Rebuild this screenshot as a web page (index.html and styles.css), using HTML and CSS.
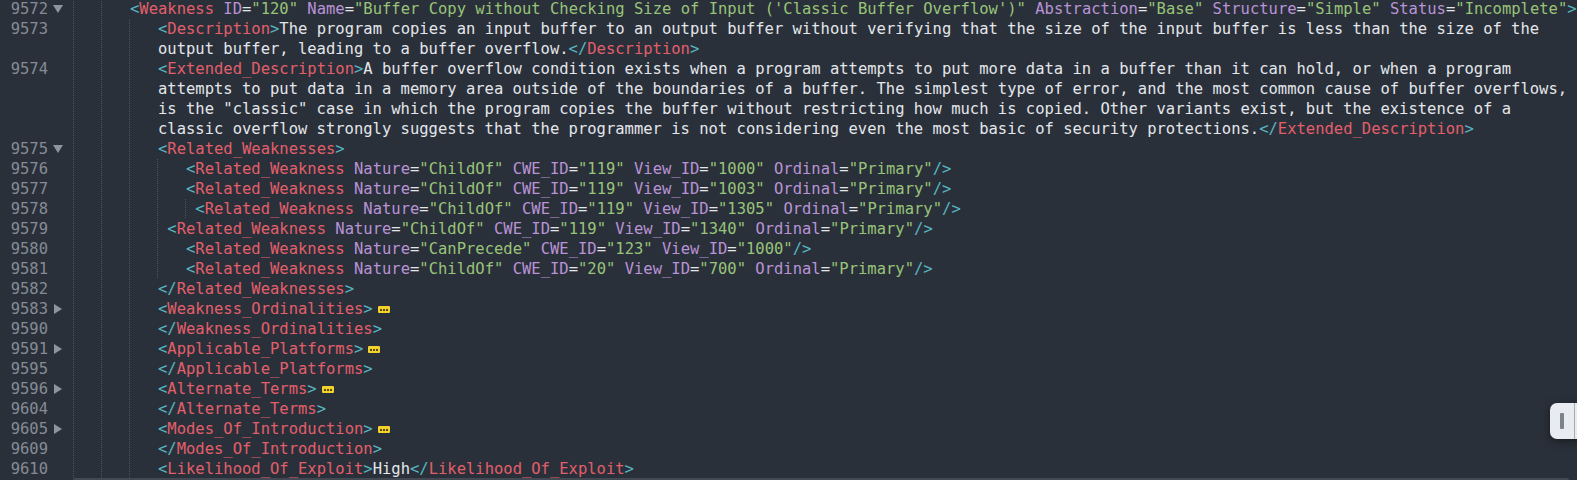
FILE: index.html
```html
<!DOCTYPE html>
<html lang="en">
<head>
<meta charset="utf-8">
<title>CWE XML</title>
<link rel="stylesheet" href="styles.css">
</head>
<body>
<div class="editor">
  <div class="lines">
  <div class="row"><div class="gutter"><span class="ln">9572</span><span class="fold down"></span></div><div class="code g2 i6"><span class="b">&lt;</span><span class="t">Weakness</span> <span class="a">ID</span>=<span class="s">"120"</span> <span class="a">Name</span>=<span class="s">"Buffer Copy without Checking Size of Input ('Classic Buffer Overflow')"</span> <span class="a">Abstraction</span>=<span class="s">"Base"</span> <span class="a">Structure</span>=<span class="s">"Simple"</span> <span class="a">Status</span>=<span class="s">"Incomplete"</span><span class="b">&gt;</span></div></div>
  <div class="row"><div class="gutter"><span class="ln">9573</span><span class="fold"></span></div><div class="code g3 i9"><span class="b">&lt;</span><span class="t">Description</span><span class="b">&gt;</span>The program copies an input buffer to an output buffer without verifying that the size of the input buffer is less than the size of the</div></div>
  <div class="row"><div class="gutter"><span class="ln"></span><span class="fold"></span></div><div class="code g3 i9">output buffer, leading to a buffer overflow.<span class="b">&lt;/</span><span class="t">Description</span><span class="b">&gt;</span></div></div>
  <div class="row"><div class="gutter"><span class="ln">9574</span><span class="fold"></span></div><div class="code g3 i9"><span class="b">&lt;</span><span class="t">Extended_Description</span><span class="b">&gt;</span>A buffer overflow condition exists when a program attempts to put more data in a buffer than it can hold, or when a program</div></div>
  <div class="row"><div class="gutter"><span class="ln"></span><span class="fold"></span></div><div class="code g3 i9">attempts to put data in a memory area outside of the boundaries of a buffer. The simplest type of error, and the most common cause of buffer overflows,</div></div>
  <div class="row"><div class="gutter"><span class="ln"></span><span class="fold"></span></div><div class="code g3 i9">is the "classic" case in which the program copies the buffer without restricting how much is copied. Other variants exist, but the existence of a</div></div>
  <div class="row"><div class="gutter"><span class="ln"></span><span class="fold"></span></div><div class="code g3 i9">classic overflow strongly suggests that the programmer is not considering even the most basic of security protections.<span class="b">&lt;/</span><span class="t">Extended_Description</span><span class="b">&gt;</span></div></div>
  <div class="row"><div class="gutter"><span class="ln">9575</span><span class="fold down"></span></div><div class="code g3 i9"><span class="b">&lt;</span><span class="t">Related_Weaknesses</span><span class="b">&gt;</span></div></div>
  <div class="row"><div class="gutter"><span class="ln">9576</span><span class="fold"></span></div><div class="code g4 i12"><span class="b">&lt;</span><span class="t">Related_Weakness</span> <span class="a">Nature</span>=<span class="s">"ChildOf"</span> <span class="a">CWE_ID</span>=<span class="s">"119"</span> <span class="a">View_ID</span>=<span class="s">"1000"</span> <span class="a">Ordinal</span>=<span class="s">"Primary"</span><span class="b">/&gt;</span></div></div>
  <div class="row"><div class="gutter"><span class="ln">9577</span><span class="fold"></span></div><div class="code g4 i12"><span class="b">&lt;</span><span class="t">Related_Weakness</span> <span class="a">Nature</span>=<span class="s">"ChildOf"</span> <span class="a">CWE_ID</span>=<span class="s">"119"</span> <span class="a">View_ID</span>=<span class="s">"1003"</span> <span class="a">Ordinal</span>=<span class="s">"Primary"</span><span class="b">/&gt;</span></div></div>
  <div class="row"><div class="gutter"><span class="ln">9578</span><span class="fold"></span></div><div class="code g5 i13"><span class="b">&lt;</span><span class="t">Related_Weakness</span> <span class="a">Nature</span>=<span class="s">"ChildOf"</span> <span class="a">CWE_ID</span>=<span class="s">"119"</span> <span class="a">View_ID</span>=<span class="s">"1305"</span> <span class="a">Ordinal</span>=<span class="s">"Primary"</span><span class="b">/&gt;</span></div></div>
  <div class="row"><div class="gutter"><span class="ln">9579</span><span class="fold"></span></div><div class="code g4 i10"><span class="b">&lt;</span><span class="t">Related_Weakness</span> <span class="a">Nature</span>=<span class="s">"ChildOf"</span> <span class="a">CWE_ID</span>=<span class="s">"119"</span> <span class="a">View_ID</span>=<span class="s">"1340"</span> <span class="a">Ordinal</span>=<span class="s">"Primary"</span><span class="b">/&gt;</span></div></div>
  <div class="row"><div class="gutter"><span class="ln">9580</span><span class="fold"></span></div><div class="code g4 i12"><span class="b">&lt;</span><span class="t">Related_Weakness</span> <span class="a">Nature</span>=<span class="s">"CanPrecede"</span> <span class="a">CWE_ID</span>=<span class="s">"123"</span> <span class="a">View_ID</span>=<span class="s">"1000"</span><span class="b">/&gt;</span></div></div>
  <div class="row"><div class="gutter"><span class="ln">9581</span><span class="fold"></span></div><div class="code g4 i12"><span class="b">&lt;</span><span class="t">Related_Weakness</span> <span class="a">Nature</span>=<span class="s">"ChildOf"</span> <span class="a">CWE_ID</span>=<span class="s">"20"</span> <span class="a">View_ID</span>=<span class="s">"700"</span> <span class="a">Ordinal</span>=<span class="s">"Primary"</span><span class="b">/&gt;</span></div></div>
  <div class="row"><div class="gutter"><span class="ln">9582</span><span class="fold"></span></div><div class="code g3 i9"><span class="b">&lt;/</span><span class="t">Related_Weaknesses</span><span class="b">&gt;</span></div></div>
  <div class="row"><div class="gutter"><span class="ln">9583</span><span class="fold right"></span></div><div class="code g3 i9"><span class="b">&lt;</span><span class="t">Weakness_Ordinalities</span><span class="b">&gt;</span><span class="dots"><i></i><i></i><i></i></span></div></div>
  <div class="row"><div class="gutter"><span class="ln">9590</span><span class="fold"></span></div><div class="code g3 i9"><span class="b">&lt;/</span><span class="t">Weakness_Ordinalities</span><span class="b">&gt;</span></div></div>
  <div class="row"><div class="gutter"><span class="ln">9591</span><span class="fold right"></span></div><div class="code g3 i9"><span class="b">&lt;</span><span class="t">Applicable_Platforms</span><span class="b">&gt;</span><span class="dots"><i></i><i></i><i></i></span></div></div>
  <div class="row"><div class="gutter"><span class="ln">9595</span><span class="fold"></span></div><div class="code g3 i9"><span class="b">&lt;/</span><span class="t">Applicable_Platforms</span><span class="b">&gt;</span></div></div>
  <div class="row"><div class="gutter"><span class="ln">9596</span><span class="fold right"></span></div><div class="code g3 i9"><span class="b">&lt;</span><span class="t">Alternate_Terms</span><span class="b">&gt;</span><span class="dots"><i></i><i></i><i></i></span></div></div>
  <div class="row"><div class="gutter"><span class="ln">9604</span><span class="fold"></span></div><div class="code g3 i9"><span class="b">&lt;/</span><span class="t">Alternate_Terms</span><span class="b">&gt;</span></div></div>
  <div class="row"><div class="gutter"><span class="ln">9605</span><span class="fold right"></span></div><div class="code g3 i9"><span class="b">&lt;</span><span class="t">Modes_Of_Introduction</span><span class="b">&gt;</span><span class="dots"><i></i><i></i><i></i></span></div></div>
  <div class="row"><div class="gutter"><span class="ln">9609</span><span class="fold"></span></div><div class="code g3 i9"><span class="b">&lt;/</span><span class="t">Modes_Of_Introduction</span><span class="b">&gt;</span></div></div>
  <div class="row"><div class="gutter"><span class="ln">9610</span><span class="fold"></span></div><div class="code g3 i9"><span class="b">&lt;</span><span class="t">Likelihood_Of_Exploit</span><span class="b">&gt;</span>High<span class="b">&lt;/</span><span class="t">Likelihood_Of_Exploit</span><span class="b">&gt;</span></div></div>
  </div>
  <div class="hscroll"></div>
  <div class="sidetab"><span class="grip"></span></div>
</div>
</body>
</html>
```
FILE: styles.css
```css
html, body {
  margin: 0;
  padding: 0;
  background: #2a303a;
}
.editor {
  position: relative;
  width: 1577px;
  height: 480px;
  overflow: hidden;
  background: #2a303a;
  font-family: "DejaVu Sans Mono", "Liberation Mono", monospace;
  font-size: 15.5px;
  color: #e3e6ea;
}
.lines {
  margin-top: -1px;
}
.row {
  display: flex;
  height: 20px;
  line-height: 20px;
}
.gutter {
  width: 73px;
  flex: none;
  display: flex;
  align-items: center;
  color: #858b94;
}
.ln {
  width: 48px;
  text-align: right;
}
.fold {
  width: 10px;
  height: 10px;
  margin-left: 5px;
  display: flex;
  align-items: center;
  justify-content: center;
}
.fold.down::before {
  content: "";
  border-left: 5px solid transparent;
  border-right: 5px solid transparent;
  border-top: 8px solid #8f959d;
}
.fold.right::before {
  content: "";
  border-top: 5px solid transparent;
  border-bottom: 5px solid transparent;
  border-left: 8px solid #8f959d;
}
.code {
  flex: 1;
  white-space: pre;
  --dot: linear-gradient(#4d535e 50%, transparent 50%);
  background-repeat: repeat-y;
  background-size: 1px 2px;
}
.g2 { background-image: var(--dot), var(--dot); background-position: 0 0, 3ch 0; }
.g3 { background-image: var(--dot), var(--dot), var(--dot); background-position: 0 0, 3ch 0, 6ch 0; }
.g4 { background-image: var(--dot), var(--dot), var(--dot), var(--dot); background-position: 0 0, 3ch 0, 6ch 0, 9ch 0; }
.g5 { background-image: var(--dot), var(--dot), var(--dot), var(--dot), var(--dot); background-position: 0 0, 3ch 0, 6ch 0, 9ch 0, 12ch 0; }
.i6 { padding-left: calc(6ch + 1px); }
.i9 { padding-left: calc(9ch + 1px); }
.i10 { padding-left: calc(10ch + 1px); }
.i12 { padding-left: calc(12ch + 1px); }
.i13 { padding-left: calc(13ch + 1px); }
.b { color: #56b6c2; }
.t { color: #e25f6a; }
.a { color: #b993d6; }
.s { color: #98c379; }
.dots {
  display: inline-flex;
  align-items: center;
  justify-content: center;
  gap: 1px;
  width: 12px;
  height: 7px;
  margin-left: 5px;
  margin-top: 7px;
  vertical-align: top;
  background: #f2d12c;
  border-radius: 1px;
}
.dots i {
  width: 2px;
  height: 2px;
  background: #5a4a10;
}
.hscroll {
  position: absolute;
  left: 73px;
  right: 8px;
  bottom: 0;
  height: 2px;
  background: #434953;
  border-radius: 2px 2px 0 0;
}
.sidetab {
  position: absolute;
  left: 1550px;
  top: 403px;
  width: 40px;
  height: 36px;
  background: #e8ebf0;
  border-radius: 7px;
  box-shadow: 0 2px 10px rgba(0, 0, 0, 0.45);
}
.sidetab::after {
  content: "";
  position: absolute;
  left: 24px;
  top: 0;
  bottom: 0;
  width: 1px;
  background: #a7abb2;
}
.grip {
  position: absolute;
  left: 10px;
  top: 10px;
  width: 4px;
  height: 16px;
  background: #7d828a;
  border-radius: 1px;
}
```
